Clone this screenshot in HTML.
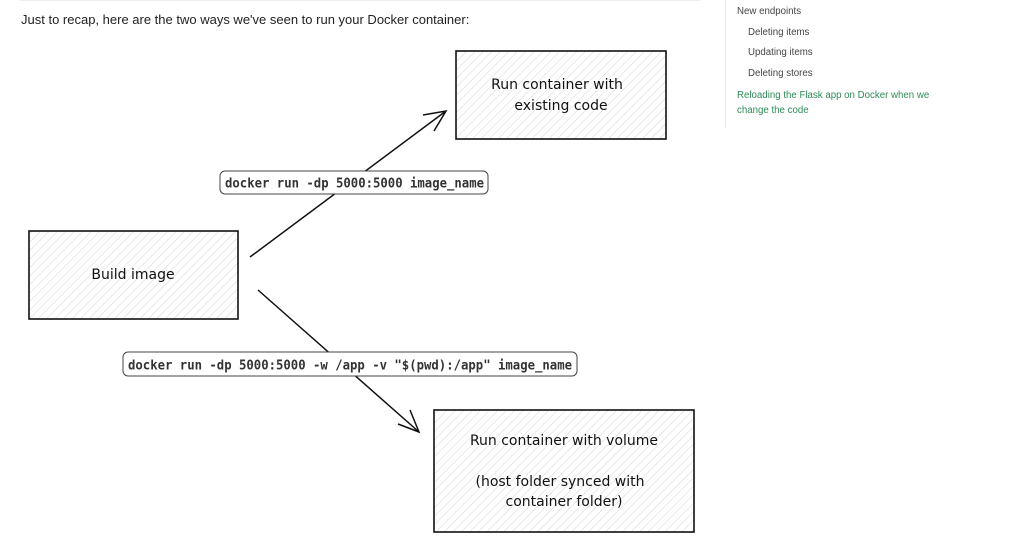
<!DOCTYPE html>
<html><head><style>
body{margin:0;width:1024px;height:554px;background:#fff;overflow:hidden;position:relative;font-family:"Liberation Sans",sans-serif}
.p{position:absolute;left:21px;top:12px;font-size:13px;color:#222}
.side{position:absolute;left:725px;top:0;height:128px;border-left:1px solid #e6e6e6;font-size:9.7px;color:#444}
.side div{position:absolute;white-space:nowrap}
svg{position:absolute;left:0;top:0}
.hand{font-family:"Comic Sans MS","DejaVu Sans",sans-serif;font-size:14px;fill:#111}
.mono{font-family:"DejaVu Sans Mono","Liberation Mono",monospace;font-size:13px;font-weight:bold;fill:#333}
</style></head><body>
<div style="position:absolute;left:20px;top:0;width:680px;height:1px;background:#eee"></div>
<div class="p">Just to recap, here are the two ways we've seen to run your Docker container:</div>
<div class="side">
<div style="left:11px;top:6px">New endpoints</div>
<div style="left:22px;top:27px">Deleting items</div>
<div style="left:22px;top:47px">Updating items</div>
<div style="left:22px;top:68px">Deleting stores</div>
<div style="left:11px;top:88px;color:#2e8b57;line-height:15px">Reloading the Flask app on Docker when we<br>change the code</div>
</div>
<svg width="1024" height="554">
<defs><pattern id="h" width="6" height="6" patternUnits="userSpaceOnUse" patternTransform="rotate(45)"><line x1="0" y1="0" x2="0" y2="6" stroke="#d4d4d4" stroke-width="1"/></pattern></defs>
<g stroke="#111" stroke-width="1.6" fill="url(#h)">
<rect x="456" y="51" width="210" height="88"/>
<rect x="29" y="231" width="209" height="88"/>
<rect x="434" y="410" width="260" height="122"/>
</g>
<g stroke="#111" stroke-width="1.5" fill="none">
<path d="M250 257 L446 111 M423 115 L446 111 L434 131"/>
<path d="M258 290 L419 432 M398 424 L419 432 L410 410"/>
</g>
<rect x="220" y="171" width="268" height="23" rx="5" fill="#fff" stroke="#444"/>
<text class="mono" x="225" y="187.5" textLength="259" lengthAdjust="spacingAndGlyphs">docker run -dp 5000:5000 image_name</text>
<rect x="123" y="352" width="454" height="24" rx="5" fill="#fff" stroke="#444"/>
<text class="mono" x="128" y="369.5" textLength="444" lengthAdjust="spacingAndGlyphs">docker run -dp 5000:5000 -w /app -v "$(pwd):/app" image_name</text>
<g class="hand" text-anchor="middle">
<text x="557" y="89">Run container with</text>
<text x="561" y="110">existing code</text>
<text x="133" y="279">Build image</text>
<text x="564" y="445">Run container with volume</text>
<text x="560" y="486">(host folder synced with</text>
<text x="564" y="506">container folder)</text>
</g>
</svg>
</body></html>
